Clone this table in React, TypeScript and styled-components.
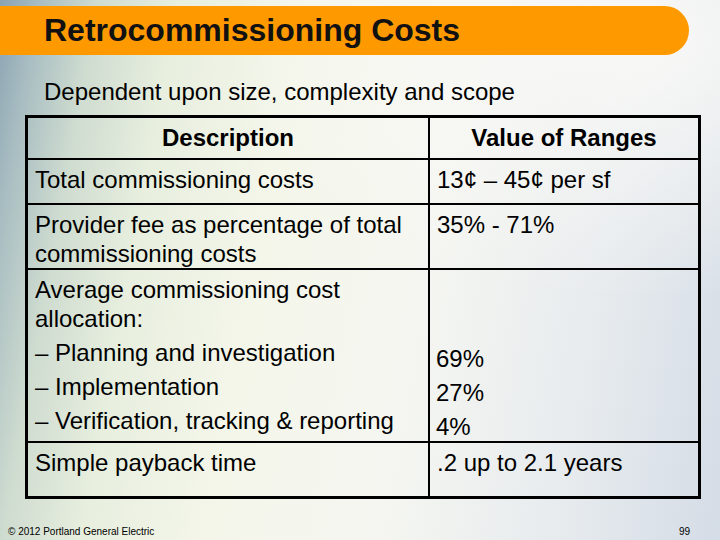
import React from "react";
import styled, { createGlobalStyle } from "styled-components";

const Global = createGlobalStyle`
  html, body { margin: 0; padding: 0; }
  body { width: 720px; height: 540px; overflow: hidden; }
`;

const Slide = styled.div`
  position: relative;
  width: 720px;
  height: 540px;
  box-sizing: border-box;
  display: flex;
  flex-direction: column;
  font-family: "Liberation Sans", Arial, sans-serif;
  color: #000;
  background:
    radial-gradient(ellipse 420px 260px at 640px 40px, rgba(250, 250, 247, 0.9), rgba(250, 250, 247, 0) 100%),
    linear-gradient(
      100deg,
      #8aa2b2 0%,
      #a9bec2 5%,
      #cfdcd0 12%,
      #e8efdf 22%,
      #f4f6ea 38%,
      #f5f6f1 58%,
      #e7ebee 80%,
      #d4dce6 100%
    );
  overflow: hidden;
`;

const TitleBar = styled.div`
  margin-top: 6px;
  width: 689px;
  height: 49px;
  box-sizing: border-box;
  background: #ff9900;
  border-radius: 0 25px 25px 0;
  display: flex;
  align-items: center;
  padding-left: 44px;
`;

const Title = styled.h1`
  margin: 0;
  font-size: 32px;
  font-weight: 700;
  color: #111;
`;

const Subtitle = styled.p`
  margin: 23px 0 0 44px;
  font-size: 24px;
  line-height: 28px;
`;

const Table = styled.div`
  margin: 9px 0 0 25px;
  width: 676px;
  box-sizing: border-box;
  border: 3px solid #000;
  display: flex;
  flex-direction: column;
`;

const Row = styled.div<{ $h: number; $last?: boolean }>`
  display: grid;
  grid-template-columns: 402px 268px;
  height: ${(p) => p.$h}px;
  box-sizing: border-box;
  border-bottom: ${(p) => (p.$last ? "none" : "2px solid #000")};
`;

const Cell = styled.div<{ $divider?: boolean; $bottom?: boolean }>`
  box-sizing: border-box;
  border-right: ${(p) => (p.$divider ? "2px solid #000" : "none")};
  padding: ${(p) => (p.$bottom ? "0 6px 0 6px" : "5px 6px 0 7px")};
  font-size: 24px;
  line-height: 29px;
  display: flex;
  flex-direction: column;
  justify-content: ${(p) => (p.$bottom ? "flex-end" : "flex-start")};
`;

const HeadCell = styled.div<{ $divider?: boolean }>`
  box-sizing: border-box;
  border-right: ${(p) => (p.$divider ? "2px solid #000" : "none")};
  display: flex;
  align-items: center;
  justify-content: center;
  font-size: 24px;
  font-weight: 700;
  line-height: 29px;
  padding-bottom: 2px;
`;

const Para = styled.div`
  & + & {
    margin-top: 5px;
  }
`;

const Footer = styled.div`
  margin-top: auto;
  display: flex;
  justify-content: space-between;
  padding: 0 30px 2px 8px;
  font-size: 10px;
  line-height: 12px;
`;

export default function App() {
  return (
    <>
      <Global />
      <Slide>
        <TitleBar>
          <Title>Retrocommissioning Costs</Title>
        </TitleBar>
        <Subtitle>Dependent upon size, complexity and scope</Subtitle>
        <Table>
          <Row $h={42}>
            <HeadCell $divider>Description</HeadCell>
            <HeadCell>Value of Ranges</HeadCell>
          </Row>
          <Row $h={45}>
            <Cell $divider>Total commissioning costs</Cell>
            <Cell>13¢ – 45¢ per sf</Cell>
          </Row>
          <Row $h={65}>
            <Cell $divider>Provider fee as percentage of total commissioning costs</Cell>
            <Cell>35% - 71%</Cell>
          </Row>
          <Row $h={173}>
            <Cell $divider>
              <Para>Average commissioning cost allocation:</Para>
              <Para>– Planning and investigation</Para>
              <Para>– Implementation</Para>
              <Para>– Verification, tracking &amp; reporting</Para>
            </Cell>
            <Cell $bottom>
              <Para>69%</Para>
              <Para>27%</Para>
              <Para>4%</Para>
            </Cell>
          </Row>
          <Row $h={53} $last>
            <Cell $divider>Simple payback time</Cell>
            <Cell>.2 up to 2.1 years</Cell>
          </Row>
        </Table>
        <Footer>
          <span>© 2012 Portland General Electric</span>
          <span>99</span>
        </Footer>
      </Slide>
    </>
  );
}
